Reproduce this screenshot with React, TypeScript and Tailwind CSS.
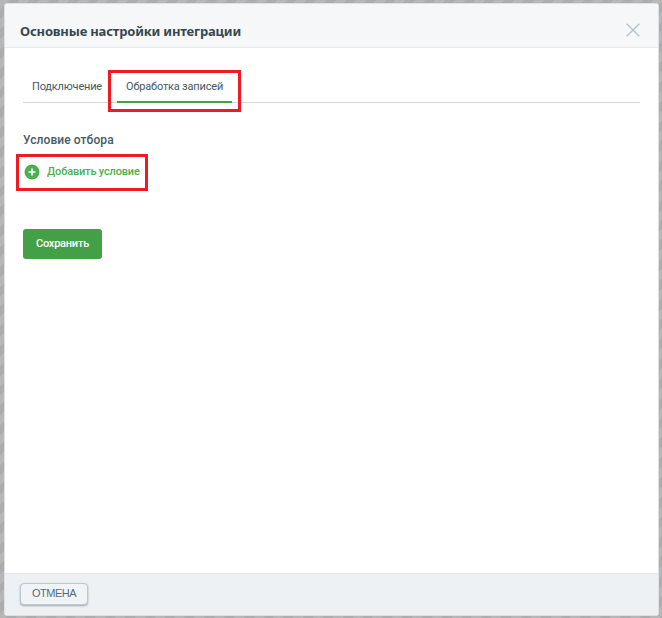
import React from 'react';

const Highlight: React.FC<{ className: string }> = ({ className }) => (
    <span className={`absolute border-[3px] border-[#ed1c24] pointer-events-none ${className}`} />
);

const Header: React.FC = () => (
    <header className="h-11 shrink-0 border-b border-[#e6eaed] bg-[#f5f7f9] flex items-center justify-between pl-[15px] pr-[18px] pt-[9px]">
        <h1 className="pt-[2px] font-['Noto_Sans',sans-serif] text-[13px] leading-5 font-bold tracking-[-0.18px] text-[#37474f] whitespace-nowrap">
            Основные настройки интеграции
        </h1>
        <button aria-label="Закрыть">
            <svg className="w-[14px] h-[14px]" viewBox="0 0 14 14" fill="none" stroke="#b0c4cb" strokeWidth="1.3">
                <path d="M0.7 0.7 13.3 13.3M13.3 0.7 0.7 13.3" />
            </svg>
        </button>
    </header>
);

const Tabs: React.FC = () => (
    <nav className="h-[33px] border-b border-[#cfd8dc] flex text-[11px] leading-4 tracking-[-0.18px] text-[#455a64]">
        <button className="w-[94px] h-[33px] pl-[9px] pt-px text-left whitespace-nowrap">Подключение</button>
        <div className="relative w-[115px] h-[33px]">
            <button className="w-full h-[33px] pt-[3px] pl-[9px] text-left border-b-2 border-[#43a047] whitespace-nowrap">
                Обработка записей
            </button>
            <Highlight className="-left-[9px] top-0 w-[133px] h-[42px]" />
        </div>
    </nav>
);

export default function App() {
    return (
        <div className="w-[662px] h-[618px] overflow-hidden pt-[3px] pl-1 bg-[repeating-linear-gradient(135deg,#b7b7b7_0px,#b7b7b7_7px,#adadad_7px,#adadad_14px)] font-[Roboto,sans-serif]">
            <div className="w-[655px] h-[613px] rounded-[3px] border border-[#dfe2e4] bg-white flex flex-col overflow-hidden">
                <Header />

                <main className="flex-1 pl-[18px] pr-[18px] pt-[22px]">
                    <Tabs />
                    <h2 className="mt-[29px] text-xs leading-4 font-medium tracking-[0.08px] text-[#455a64]">Условие отбора</h2>
                    <div className="relative mt-[15px] h-[18px] w-[130px]">
                        <button className="flex items-center text-[11px] leading-4 font-medium tracking-[-0.17px] text-[#4caf50] whitespace-nowrap">
                            <svg className="w-4 h-4 mr-2 translate-x-px" viewBox="0 0 16 16">
                                <circle cx="8" cy="8" r="7.5" fill="#4caf50" />
                                <path d="M8 4.5v7M4.5 8h7" stroke="#fff" strokeWidth="1.7" />
                            </svg>
                            <span className="pb-px leading-[17px]">Добавить условие</span>
                        </button>
                        <Highlight className="-left-[7px] -top-[9px] w-[132px] h-[37px]" />
                    </div>
                    <button className="mt-12 block w-[79px] h-[30px] rounded-[3px] bg-[#43a047] text-white text-[11px] font-medium tracking-[-0.22px] whitespace-nowrap">
                        Сохранить
                    </button>
                </main>

                <footer className="h-[42px] shrink-0 border-t border-[#e1e7ea] bg-[#edf1f4] pl-[15px] pt-[9px]">
                    <button className="block w-[68px] h-[22px] pb-[2px] rounded-[4px] border border-[#b9cbd1] bg-[#f1f4f6] shadow-[0_1px_2px_rgba(0,0,0,0.3)] font-['Liberation_Sans',sans-serif] text-[11px] leading-[18px] tracking-[-0.5px] text-[#546e7a]">
                        ОТМЕНА
                    </button>
                </footer>
            </div>
        </div>
    );
}
